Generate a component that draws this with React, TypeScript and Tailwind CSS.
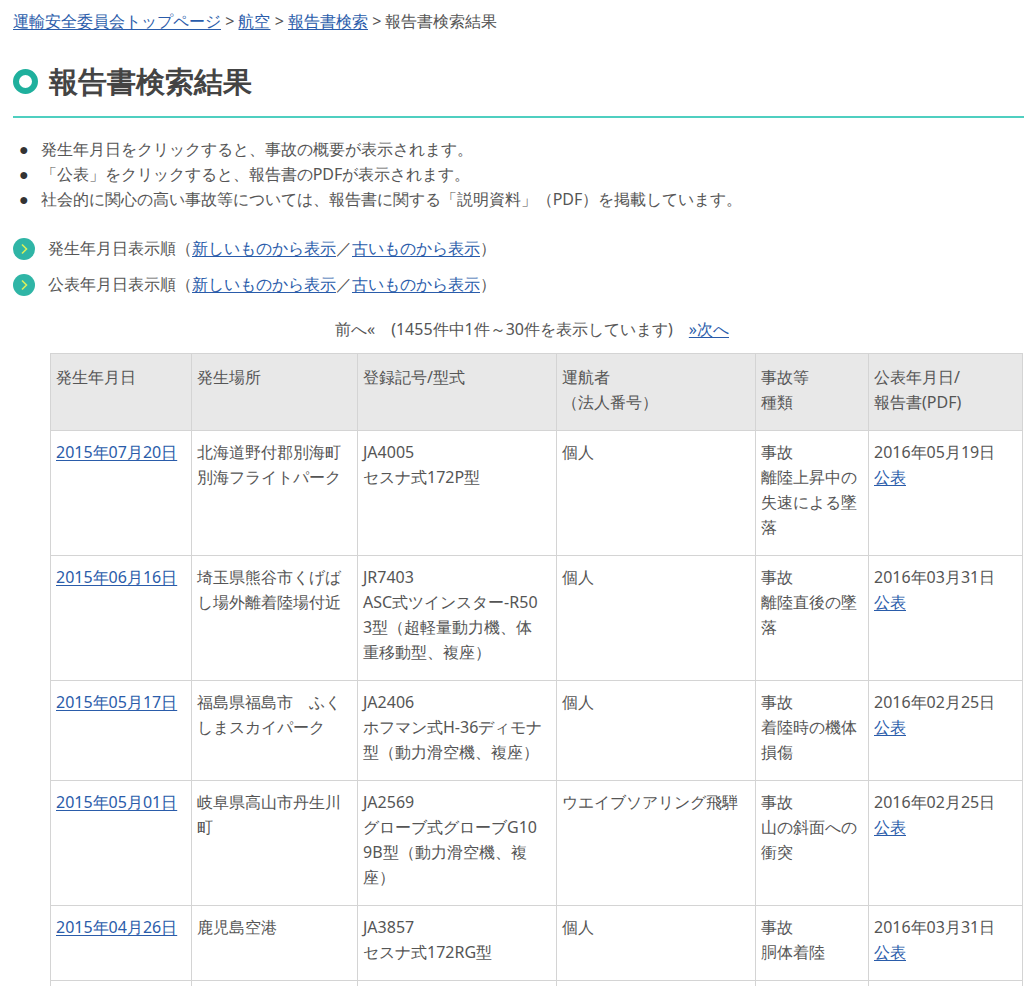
const font = "font-['Noto_Sans_CJK_JP','Noto_Sans',sans-serif]"

function A({ children }: { children: React.ReactNode }) {
  return <a className="text-[#2a5caa] underline underline-offset-2" href="#">{children}</a>
}

function Arrow() {
  return (
    <span className="w-[22px] h-[22px] rounded-full bg-[#2fb5a6] flex items-center justify-center shrink-0">
      <svg width="10" height="12" viewBox="0 0 10 12"><path d="M3 1.5 L7.5 6 L3 10.5" stroke="#d9ef5a" strokeWidth="1.6" fill="none" /></svg>
    </span>
  )
}

const rows = [
  ["2015年07月20日", ["北海道野付郡別海町", "別海フライトパーク"], ["JA4005", "セスナ式172P型"], "個人", ["事故", "離陸上昇中の", "失速による墜", "落"], "2016年05月19日"],
  ["2015年06月16日", ["埼玉県熊谷市くげば", "し場外離着陸場付近"], ["JR7403", "ASC式ツインスター-R50", "3型（超軽量動力機、体", "重移動型、複座）"], "個人", ["事故", "離陸直後の墜", "落"], "2016年03月31日"],
  ["2015年05月17日", ["福島県福島市　ふく", "しまスカイパーク"], ["JA2406", "ホフマン式H-36ディモナ", "型（動力滑空機、複座）"], "個人", ["事故", "着陸時の機体", "損傷"], "2016年02月25日"],
  ["2015年05月01日", ["岐阜県高山市丹生川", "町"], ["JA2569", "グローブ式グローブG10", "9B型（動力滑空機、複", "座）"], "ウエイブソアリング飛騨", ["事故", "山の斜面への", "衝突"], "2016年02月25日"],
  ["2015年04月26日", ["鹿児島空港"], ["JA3857", "セスナ式172RG型"], "個人", ["事故", "胴体着陸"], "2016年03月31日"],
] as const

export default function App() {
  const td = "border border-[#d4d4d4] align-top px-[5px] pt-[9px] pb-[15px]"
  return (
    <div className={`${font} text-[#555] text-[16px] leading-[25px] px-[13px] pt-[9px] w-[1024px] h-[986px] overflow-hidden bg-white`}>
      <div className="text-[16px]">
        <A>運輸安全委員会トップページ</A> &gt; <A>航空</A> &gt; <A>報告書検索</A> &gt; 報告書検索結果
      </div>
      <div className="flex items-center gap-[11px] mt-[27px] pb-[15px] border-b-2 border-[#4fcfc0] mr-[-13px]">
        <span className="w-[25px] h-[25px] rounded-full border-[6px] border-[#1fb09d]" />
        <h1 className="text-[29px] font-bold text-[#444] leading-[40px]">報告書検索結果</h1>
      </div>
      <ul className="mt-[19px] text-[16px] pl-[6px]">
        <li className="flex gap-[12px]"><span className="text-[#333]">●</span>発生年月日をクリックすると、事故の概要が表示されます。</li>
        <li className="flex gap-[12px]"><span className="text-[#333]">●</span>「公表」をクリックすると、報告書のPDFが表示されます。</li>
        <li className="flex gap-[12px]"><span className="text-[#333]">●</span>社会的に関心の高い事故等については、報告書に関する「説明資料」（PDF）を掲載しています。</li>
      </ul>
      <div className="mt-[24px] flex flex-col gap-[11px] text-[16px]">
        {["発生年月日表示順", "公表年月日表示順"].map((t) => (
          <div key={t} className="flex items-center gap-[13px]">
            <Arrow />
            <span>{t}（<A>新しいものから表示</A>／<A>古いものから表示</A>）</span>
          </div>
        ))}
      </div>
      <div className="text-center text-[16px] mt-[20px] ml-[40px]">
        前へ«　(1455件中1件～30件を表示しています)　<A>»次へ</A>
      </div>
      <table className="mt-[11px] ml-[37px] border-collapse w-[973px] text-[16px]">
        <thead>
          <tr className="bg-[#e8e8e8]">
            {[["発生年月日"], ["発生場所"], ["登録記号/型式"], ["運航者", "（法人番号）"], ["事故等", "種類"], ["公表年月日/", "報告書(PDF)"]].map((h, i) => (
              <th key={i} className={`${td} font-normal text-left h-[74px] pt-[11px]`}>
                {h.map((l) => <div key={l}>{l}</div>)}
              </th>
            ))}
          </tr>
        </thead>
        <tbody>
          {rows.map((r, i) => (
            <tr key={i}>
              <td className={`${td} w-[141px]`}><A>{r[0]}</A></td>
              <td className={`${td} w-[166px]`}>{r[1].map((l) => <div key={l}>{l}</div>)}</td>
              <td className={`${td} w-[199px]`}>{r[2].map((l) => <div key={l}>{l}</div>)}</td>
              <td className={`${td} w-[199px]`}>{r[3]}</td>
              <td className={`${td} w-[113px]`}>{r[4].map((l) => <div key={l}>{l}</div>)}</td>
              <td className={td}><div>{r[5]}</div><A>公表</A></td>
            </tr>
          ))}
          <tr><td className={`${td} h-[40px]`} /><td className={td} /><td className={td} /><td className={td} /><td className={td} /><td className={td} /></tr>
        </tbody>
      </table>
    </div>
  )
}
